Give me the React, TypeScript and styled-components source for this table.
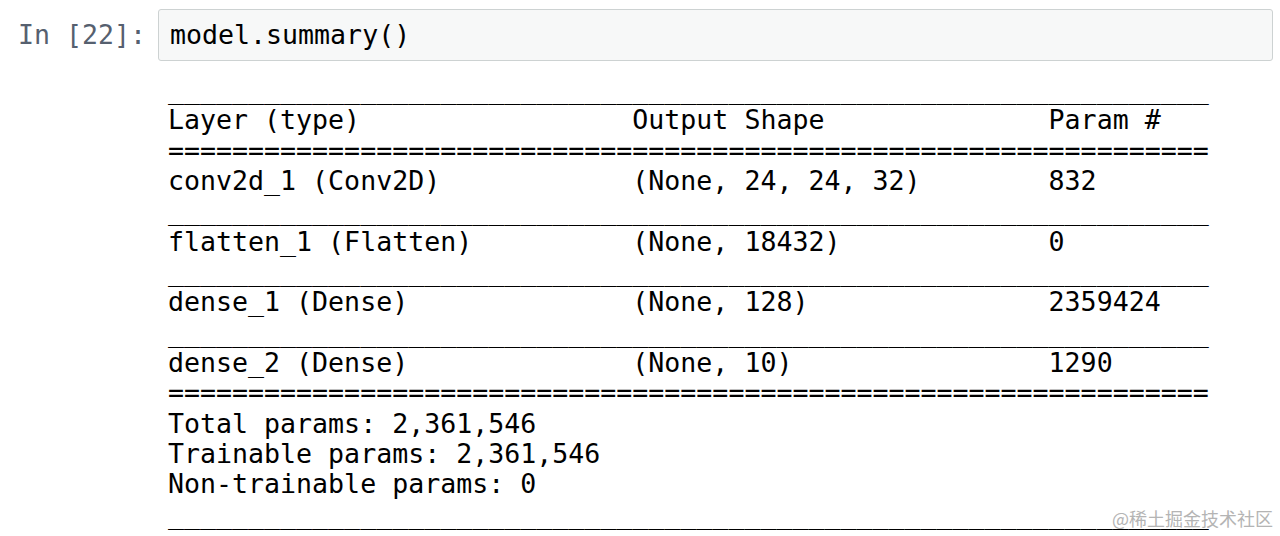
import React, { FC } from "react";
import styled, { createGlobalStyle } from "styled-components";

const summary = `_________________________________________________________________
Layer (type)                 Output Shape              Param #   
=================================================================
conv2d_1 (Conv2D)            (None, 24, 24, 32)        832       
_________________________________________________________________
flatten_1 (Flatten)          (None, 18432)             0         
_________________________________________________________________
dense_1 (Dense)              (None, 128)               2359424   
_________________________________________________________________
dense_2 (Dense)              (None, 10)                1290      
=================================================================
Total params: 2,361,546
Trainable params: 2,361,546
Non-trainable params: 0
_________________________________________________________________`;

const GlobalStyle = createGlobalStyle`
  html, body {
    margin: 0;
    padding: 0;
    background: #ffffff;
  }
`;

const App: FC = () => {
  return (
    <>
      <GlobalStyle />
      <Notebook>
        <InputRow>
          <Prompt>In [22]:</Prompt>
          <InputBox>model.summary()</InputBox>
        </InputRow>
        <OutputText>{summary}</OutputText>
        <Watermark>@稀土掘金技术社区</Watermark>
      </Notebook>
    </>
  );
};

const Notebook = styled.div`
  position: relative;
  width: 1280px;
  height: 536px;
  overflow: hidden;
  font-family: "DejaVu Sans Mono", "Liberation Mono", monospace;
  font-size: 26.6px;
`;

const InputRow = styled.div`
  display: flex;
  align-items: center;
  padding-top: 9px;
  padding-right: 7px;
`;

const Prompt = styled.div`
  width: 146px;
  padding-right: 12px;
  text-align: right;
  color: #56606f;
  line-height: 52px;
  white-space: pre;
`;

const InputBox = styled.div`
  flex: 1;
  height: 50px;
  line-height: 50px;
  padding: 0 11px;
  background: #f7f8f8;
  border: 1px solid #cdd2d2;
  border-radius: 3px;
  color: #000000;
  white-space: pre;
`;

const OutputText = styled.pre`
  margin: 14px 0 0 168px;
  font-family: inherit;
  font-size: inherit;
  line-height: 30.35px;
  color: #000000;
`;

const Watermark = styled.div`
  position: absolute;
  right: 7px;
  bottom: 5px;
  font-family: "Noto Sans CJK SC", sans-serif;
  font-size: 18px;
  color: #b4b4b4;
`;

export default App;
